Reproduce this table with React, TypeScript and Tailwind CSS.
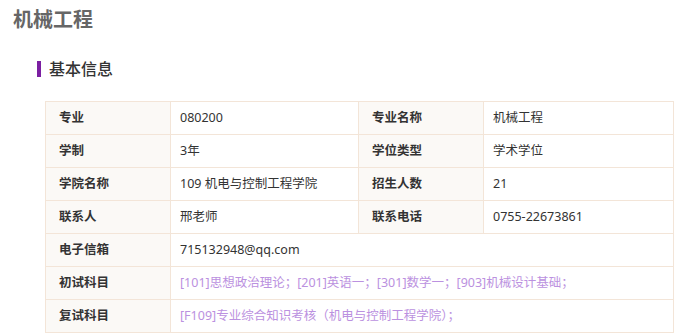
import React from "react";

const cellL = "border border-[#f3e5d8] bg-[#fbf9f6] pl-[13px] pr-2 h-[33px] font-bold text-[#333]";
const cellV = "border border-[#f3e5d8] bg-white pl-[9px] pr-2 h-[33px] text-[#333]";

export default function App() {
  return (
    <div
      className="bg-white w-[679px] h-[335px] overflow-hidden"
      style={{ fontFamily: '"Noto Sans", "Noto Sans CJK SC", sans-serif' }}
    >
      <div className="pl-[13px] pt-[6px] text-[20px] font-bold text-[#666] leading-[28px]">机械工程</div>
      <div className="flex items-center pl-[37px] mt-[24px] h-[22px]">
        <div className="w-[4px] h-[16px] bg-[#7b1fa2]" />
        <div className="ml-[8px] text-[16px] font-medium text-[#333] leading-[22px]">基本信息</div>
      </div>
      <div className="pl-[45px] mt-[21px]">
        <table className="table-fixed border-collapse w-[628px] text-[12.5px]">
          <colgroup>
            <col className="w-[125px]" />
            <col className="w-[188px]" />
            <col className="w-[125px]" />
            <col className="w-[190px]" />
          </colgroup>
          <tbody>
            <tr>
              <td className={cellL}>专业</td>
              <td className={cellV}>080200</td>
              <td className={cellL}>专业名称</td>
              <td className={cellV}>机械工程</td>
            </tr>
            <tr>
              <td className={cellL}>学制</td>
              <td className={cellV}>3年</td>
              <td className={cellL}>学位类型</td>
              <td className={cellV}>学术学位</td>
            </tr>
            <tr>
              <td className={cellL}>学院名称</td>
              <td className={cellV}>109 机电与控制工程学院</td>
              <td className={cellL}>招生人数</td>
              <td className={cellV}>21</td>
            </tr>
            <tr>
              <td className={cellL}>联系人</td>
              <td className={cellV}>邢老师</td>
              <td className={cellL}>联系电话</td>
              <td className={cellV}>0755-22673861</td>
            </tr>
            <tr>
              <td className={cellL}>电子信箱</td>
              <td className={cellV} colSpan={3}>715132948@qq.com</td>
            </tr>
            <tr>
              <td className={cellL}>初试科目</td>
              <td className={`${cellV} !text-[#bb91e0]`} colSpan={3}>
                [101]思想政治理论；[201]英语一；[301]数学一；[903]机械设计基础；
              </td>
            </tr>
            <tr>
              <td className={cellL}>复试科目</td>
              <td className={`${cellV} !text-[#bb91e0]`} colSpan={3}>
                [F109]专业综合知识考核（机电与控制工程学院）；
              </td>
            </tr>
          </tbody>
        </table>
      </div>
    </div>
  );
}
